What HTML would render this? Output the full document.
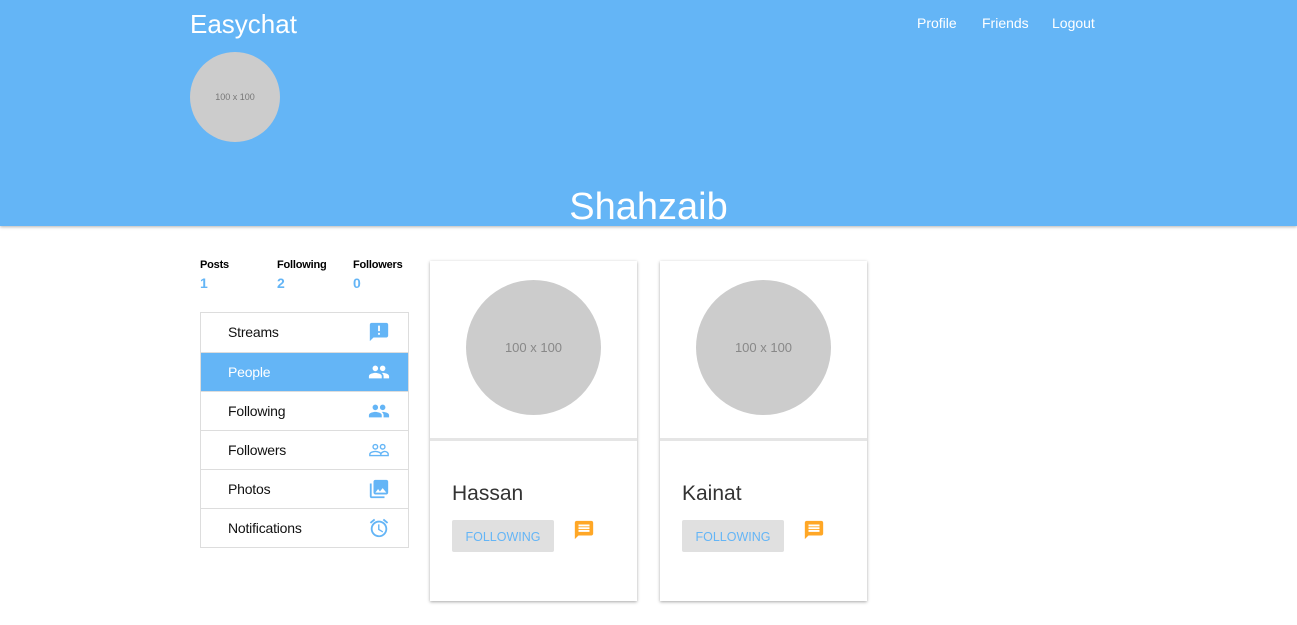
<!DOCTYPE html>
<html><head><meta charset="utf-8"><style>
*{box-sizing:border-box;margin:0;padding:0}
body{width:1297px;height:625px;background:#fff;font-family:"Liberation Sans",sans-serif;position:relative;overflow:hidden}
.hdr{position:absolute;left:0;top:0;width:1297px;height:226px;background:#64b5f6;box-shadow:0 1px 3px rgba(0,0,0,.3)}
.brand{position:absolute;left:190px;top:9px;color:#fff;font-size:26px}
.nav{position:absolute;top:15px;color:#fff;font-size:14px}
.av{position:absolute;left:190px;top:52px;width:90px;height:90px;border-radius:50%;background:#ccc;color:#777;font-size:9px;text-align:center;line-height:90px}
.name{position:absolute;left:0;width:1297px;text-align:center;top:183px;color:#fff;font-size:38px;line-height:48px}
.st{position:absolute;top:259px;font-size:11px;font-weight:bold;color:#000;letter-spacing:-0.2px}
.st b{display:block;color:#64b5f6;font-size:14px;margin-top:4px}
.menu{position:absolute;left:200px;top:312px;width:209px;border:1px solid #ddd}
.mi{height:39px;border-top:1px solid #ddd;padding-left:27px;line-height:39px;font-size:14px;color:#111;position:relative;letter-spacing:-0.2px}
.mi:first-child{border-top:none}
.mi.on{background:#64b5f6;color:#fff}
.mi svg{position:absolute;right:18px;top:8px}
.card{position:absolute;top:261px;width:207px;height:340px;background:#fff;box-shadow:0 1px 3px rgba(0,0,0,.35)}
.card .img{height:180px;border-bottom:3px solid #e5e5e5;position:relative}
.card .c{position:absolute;left:36px;top:19px;width:135px;height:135px;border-radius:50%;background:#ccc;color:#888;font-size:13px;text-align:center;line-height:135px}
.card .n{position:absolute;left:22px;top:221px;font-size:21px;font-weight:300;color:#333}
.card .btn{position:absolute;left:22px;top:259px;width:102px;height:32px;background:#e0e0e0;border-radius:2px;color:#64b5f6;font-size:12.5px;text-align:center;line-height:34px}
.card svg{position:absolute;left:143px;top:258px}
</style></head><body>
<div class="hdr">
<div class="brand">Easychat</div>
<div class="nav" style="left:917px">Profile</div>
<div class="nav" style="left:982px">Friends</div>
<div class="nav" style="left:1052px">Logout</div>
<div class="av">100 x 100</div>
<div class="name">Shahzaib</div>
</div>
<div class="st" style="left:200px">Posts<b>1</b></div>
<div class="st" style="left:277px">Following<b>2</b></div>
<div class="st" style="left:353px">Followers<b>0</b></div>
<div class="menu">
<div class="mi">Streams<svg width="22" height="22" viewBox="0 0 24 24"><path fill="#64b5f6" d="M20 2H4c-1.1 0-2 .9-2 2v18l4-4h14c1.1 0 2-.9 2-2V4c0-1.1-.9-2-2-2zm-7 9h-2V5h2v6zm0 4h-2v-2h2v2z"/></svg></div>
<div class="mi on">People<svg width="22" height="22" viewBox="0 0 24 24"><path fill="#fff" d="M16 11c1.66 0 2.99-1.34 2.99-3S17.66 5 16 5s-3 1.34-3 3 1.34 3 3 3zm-8 0c1.66 0 2.99-1.34 2.99-3S9.66 5 8 5 5 6.34 5 8s1.34 3 3 3zm0 2c-2.33 0-7 1.17-7 3.5V19h14v-2.5C15 14.170 10.33 13 8 13zm8 0c-.29 0-.62.02-.97.05 1.16.84 1.97 1.97 1.97 3.45V19h6v-2.5c0-2.33-4.670-3.5-7-3.5z"/></svg></div>
<div class="mi">Following<svg width="22" height="22" viewBox="0 0 24 24"><path fill="#64b5f6" d="M16 11c1.66 0 2.99-1.34 2.99-3S17.66 5 16 5s-3 1.34-3 3 1.34 3 3 3zm-8 0c1.66 0 2.99-1.34 2.99-3S9.66 5 8 5 5 6.34 5 8s1.34 3 3 3zm0 2c-2.33 0-7 1.17-7 3.5V19h14v-2.5C15 14.17 10.33 13 8 13zm8 0c-.29 0-.62.02-.97.05 1.16.84 1.970 1.97 1.97 3.45V19h6v-2.5c0-2.33-4.67-3.5-7-3.5z"/></svg></div>
<div class="mi">Followers<svg width="22" height="22" viewBox="0 0 24 24" fill="none" stroke="#64b5f6" stroke-width="1.5"><circle cx="8" cy="8.5" r="2.5"/><circle cx="16" cy="8.5" r="2.5"/><path d="M2 18v-1.5c0-1.5 3-3 6-3s6 1.5 6 3V18zM14 18v-1.5c0-1.5 3-3 4-3 2 0 4 1.5 4 3V18z"/></svg></div>
<div class="mi">Photos<svg width="22" height="22" viewBox="0 0 24 24"><path fill="#64b5f6" d="M22 16V4c0-1.1-.9-2-2-2H8c-1.1 0-2 .9-2 2v12c0 1.1.9 2 2 2h12c1.1 0 2-.9 2-2zm-11-4l2.03 2.71L16 11l4 5H8l3-4zM2 6v14c0 1.1.9 2 2 2h14v-2H4V6H2z"/></svg></div>
<div class="mi">Notifications<svg width="22" height="22" viewBox="0 0 24 24"><path fill="#64b5f6" d="M22 5.72l-4.6-3.86-1.29 1.53 4.6 3.86L22 5.72zM7.88 3.39L6.6 1.86 2 5.71l1.29 1.53 4.59-3.85zM12.5 8H11v6l4.75 2.85.75-1.23-4-2.37V8zM12 4c-4.97 0-9 4.03-9 9s4.02 9 9 9c4.97 0 9-4.03 9-9s-4.03-9-9-9zm0 16c-3.87 0-7-3.13-7-7s3.13-7 7-7 7 3.13 7 7-3.13 7-7 7z"/></svg></div>
</div>
<div class="card" style="left:430px"><div class="img"><div class="c">100 x 100</div></div><div class="n">Hassan</div><div class="btn">FOLLOWING</div><svg width="22" height="22" viewBox="0 0 24 24"><path fill="#ffa726" d="M20 2H4c-1.1 0-2 .9-2 2v18l4-4h14c1.1 0 2-.9 2-2V4c0-1.1-.9-2-2-2zm-2 12H6v-2h12v2zm0-3H6V9h12v2zm0-3H6V6h12v2z"/></svg></div>
<div class="card" style="left:660px"><div class="img"><div class="c">100 x 100</div></div><div class="n">Kainat</div><div class="btn">FOLLOWING</div><svg width="22" height="22" viewBox="0 0 24 24"><path fill="#ffa726" d="M20 2H4c-1.1 0-2 .9-2 2v18l4-4h14c1.1 0 2-.9 2-2V4c0-1.1-.9-2-2-2zm-2 12H6v-2h12v2zm0-3H6V9h12v2zm0-3H6V6h12v2z"/></svg></div>
</body></html>
